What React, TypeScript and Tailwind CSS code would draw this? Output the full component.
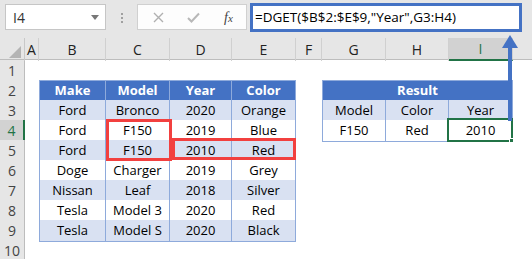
import React from "react";

const cols = "grid grid-cols-[25px_14px_67px_64px_62px_64px_26px_64px_63px_64px_1fr]";

const letters = ["A", "B", "C", "D", "E", "F", "G", "H", "I", ""];

type Row = { n: number; cells: (string | null)[]; band?: "head" | "light" | "white"; res?: "head" | "light" | "white" };

const rows: Row[] = [
  { n: 1, cells: [] },
  { n: 2, cells: ["Make", "Model", "Year", "Color"], band: "head", res: "head" },
  { n: 3, cells: ["Ford", "Bronco", "2020", "Orange"], band: "light", res: "light" },
  { n: 4, cells: ["Ford", "F150", "2019", "Blue"], band: "white", res: "white" },
  { n: 5, cells: ["Ford", "F150", "2010", "Red"], band: "light" },
  { n: 6, cells: ["Doge", "Charger", "2019", "Grey"], band: "white" },
  { n: 7, cells: ["Nissan", "Leaf", "2018", "Silver"], band: "light" },
  { n: 8, cells: ["Tesla", "Model 3", "2020", "Red"], band: "white" },
  { n: 9, cells: ["Tesla", "Model S", "2020", "Black"], band: "light" },
  { n: 10, cells: [] },
];

const result3 = ["Model", "Color", "Year"];
const result4 = ["F150", "Red", "2010"];

function bandClass(b?: string) {
  if (b === "head") return "bg-[#4472c4] text-white font-bold";
  if (b === "light") return "bg-[#d9e1f2] text-black";
  return "bg-white text-black";
}

function TableCell({ text, band, first, top }: { text: string; band?: string; first?: boolean; top?: boolean }) {
  return (
    <div
      className={`flex items-center justify-center border-r border-b border-[#8eaadb] ${first ? "border-l" : ""} ${top ? "border-t" : ""} ${bandClass(band)}`}
    >
      {text}
    </div>
  );
}

export default function App() {
  return (
    <div className="w-[532px] h-[259px] overflow-hidden bg-white font-['Open_Sans',sans-serif] text-[13px] relative">
      {/* formula bar */}
      <div className="h-[38px] bg-[#e6e6e6] flex items-start pt-[3px]">
        <div className="ml-[5px] mt-[1px] w-[101px] h-[26px] bg-white border border-[#c6c6c6] flex items-center pl-[7px] pr-[6px] text-[#333] text-[14px]">
          <span className="flex-1">I4</span>
          <svg width="8" height="5" viewBox="0 0 8 5">
            <path d="M0 0 L8 0 L4 5 Z" fill="#777" />
          </svg>
        </div>
        <div className="w-[31px] h-[29px] flex flex-col items-center justify-center gap-[2px]">
          <div className="w-[2px] h-[2px] bg-[#a0a0a0]" />
          <div className="w-[2px] h-[2px] bg-[#a0a0a0]" />
          <div className="w-[2px] h-[2px] bg-[#a0a0a0]" />
        </div>
        <div className="mt-[1px] w-[110px] h-[26px] bg-[#fdfdfd] border border-[#d0d0d0] flex items-center">
          <svg className="ml-[15px]" width="11" height="11" viewBox="0 0 11 11">
            <path d="M1 1 L10 10 M10 1 L1 10" stroke="#b0b0b0" strokeWidth="1.4" />
          </svg>
          <svg className="ml-[23px]" width="13" height="11" viewBox="0 0 13 11">
            <path d="M1 6 L4.5 9.5 L12 1.5" stroke="#b8b8b8" strokeWidth="2" fill="none" />
          </svg>
          <span className="ml-[24px] font-['Liberation_Serif',serif] italic text-[14px] text-[#444]">
            f<span className="text-[11px]">x</span>
          </span>
        </div>
        <div className="ml-[3px] w-[272px] h-[29px] border-[3px] border-[#4472c4] bg-white flex items-center pl-[2px] text-[13.5px] text-black whitespace-nowrap">
          =DGET($B$2:$E$9,"Year",G3:H4)
        </div>
      </div>

      {/* column headers */}
      <div className={`${cols} h-[22px] bg-[#e6e6e6] border-b border-[#bdbdbd] text-[#222] text-[14px]`}>
        <div className="relative border-r border-[#c8c8c8]">
          <svg className="absolute right-[3px] bottom-[3px]" width="12" height="12" viewBox="0 0 12 12">
            <path d="M12 0 L12 12 L0 12 Z" fill="#b4b4b4" />
          </svg>
        </div>
        {letters.map((l, i) => (
          <div
            key={i}
            className={`flex items-center justify-center ${l ? "border-r border-[#d0d0d0]" : ""} ${
              l === "I" ? "bg-[#d2d2d2] border-b-2 border-b-[#217346] text-[#217346]" : ""
            }`}
          >
            {l}
          </div>
        ))}
      </div>

      {/* rows */}
      {rows.map((r) => (
        <div key={r.n} className={`${cols} h-5`}>
          <div
            className={`flex items-center justify-center border-b border-[#d4d4d4] text-[14px] ${
              r.n === 4
                ? "bg-[#d2d2d2] border-r-2 border-r-[#217346] text-[#217346]"
                : "bg-[#e6e6e6] border-r border-r-[#bdbdbd] text-[#444]"
            }`}
          >
            {r.n}
          </div>
          <div />
          {r.band ? (
            r.cells.map((c, i) => (
              <TableCell key={i} text={c as string} band={r.band} first={i === 0} top={r.n === 2} />
            ))
          ) : (
            <>
              <div />
              <div />
              <div />
              <div />
            </>
          )}
          <div />
          {r.res === "head" && (
            <div className="col-span-3 flex items-center justify-center border border-[#8eaadb] bg-[#4472c4] text-white font-bold">
              Result
            </div>
          )}
          {r.res === "light" &&
            result3.map((c, i) => <TableCell key={i} text={c} band="light" first={i === 0} />)}
          {r.res === "white" &&
            result4.map((c, i) => <TableCell key={i} text={c} band="white" first={i === 0} />)}
        </div>
      ))}

      {/* red highlight boxes */}
      <div className="absolute left-[106px] top-[119px] w-[66px] h-[42px] border-[3px] border-[#f2403f]" />
      <div className="absolute left-[172px] top-[138px] w-[124px] h-[22px] border-[3px] border-[#f2403f]" />

      {/* active cell I4 */}
      <div className="absolute left-[447px] top-[118px] w-[66px] h-[24px] border-2 border-[#217346]" />
      <div className="absolute left-[509px] top-[138px] w-[5px] h-[5px] bg-[#217346] border border-white" />

      {/* arrow */}
      <svg className="absolute left-[500px] top-[33px]" width="20" height="88" viewBox="0 0 20 88">
        <path d="M10 2 L18 15 L2 15 Z" fill="#4472c4" />
        <rect x="8" y="14" width="4" height="74" fill="#4472c4" />
      </svg>
    </div>
  );
}
